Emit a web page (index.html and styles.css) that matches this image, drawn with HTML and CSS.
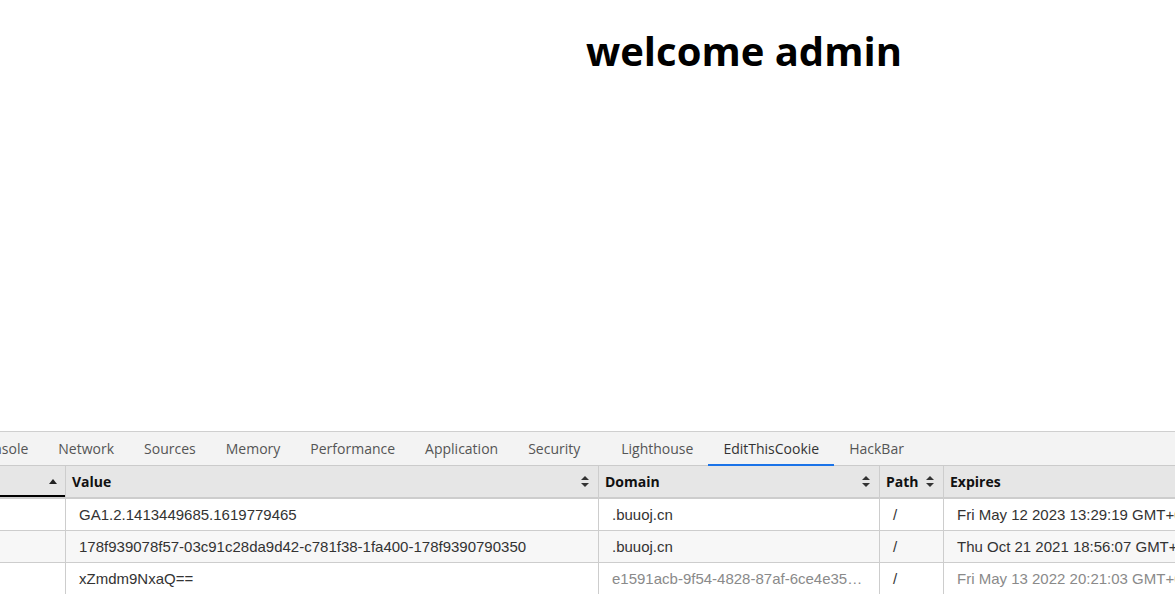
FILE: index.html
```html
<!DOCTYPE html>
<html>
<head>
<meta charset="utf-8">
<link rel="stylesheet" href="styles.css">
</head>
<body>
<main class="page">
  <h1 class="title">welcome admin</h1>
</main>
<section class="devtools">
  <nav class="tabs">
    <span class="tab">Console</span>
    <span class="tab">Network</span>
    <span class="tab">Sources</span>
    <span class="tab">Memory</span>
    <span class="tab">Performance</span>
    <span class="tab">Application</span>
    <span class="tab">Security</span>
    <span class="tab tab-ext">Lighthouse</span>
    <span class="tab active">EditThisCookie</span>
    <span class="tab">HackBar</span>
  </nav>
  <div class="cookies">
    <div class="row head">
      <div class="cell sorted"><span></span><i class="arrow-up"></i></div>
      <div class="cell"><span>Value</span><i class="sort"></i></div>
      <div class="cell"><span>Domain</span><i class="sort"></i></div>
      <div class="cell"><span>Path</span><i class="sort"></i></div>
      <div class="cell"><span>Expires</span></div>
    </div>
    <div class="row">
      <div class="cell"></div>
      <div class="cell">GA1.2.1413449685.1619779465</div>
      <div class="cell">.buuoj.cn</div>
      <div class="cell">/</div>
      <div class="cell">Fri May 12 2023 13:29:19 GMT+0800</div>
    </div>
    <div class="row alt">
      <div class="cell"></div>
      <div class="cell">178f939078f57-03c91c28da9d42-c781f38-1fa400-178f9390790350</div>
      <div class="cell">.buuoj.cn</div>
      <div class="cell">/</div>
      <div class="cell">Thu Oct 21 2021 18:56:07 GMT+0800</div>
    </div>
    <div class="row last">
      <div class="cell"></div>
      <div class="cell">xZmdm9NxaQ==</div>
      <div class="cell dim"><span class="clip">e1591acb-9f54-4828-87af-6ce4e35a1b2c.node4.buuoj.cn</span></div>
      <div class="cell">/</div>
      <div class="cell dim">Fri May 13 2022 20:21:03 GMT+0800</div>
    </div>
  </div>
</section>
</body>
</html>
```

FILE: styles.css
```css
html, body {
  margin: 0;
  padding: 0;
  background: #fff;
  overflow: hidden;
}

.page {
  height: 431px;
  padding-left: 586px;
  box-sizing: border-box;
}

.title {
  margin: 0;
  padding-top: 24px;
  font-family: "Open Sans", "Noto Sans", sans-serif;
  font-weight: 700;
  font-size: 40px;
  line-height: 54px;
  color: #000;
  letter-spacing: 0;
}

.devtools {
  border-top: 1px solid #cfcfcf;
  overflow: hidden;
  width: 1175px;
}

.tabs {
  display: flex;
  height: 33px;
  background: #f3f3f3;
  border-bottom: 1px solid #cbcbcb;
  margin-left: -39px;
  font-family: "Open Sans", "Noto Sans", sans-serif;
  font-size: 14px;
  color: #555;
}

.tab {
  display: flex;
  align-items: center;
  padding: 0 15px;
  white-space: nowrap;
  box-sizing: border-box;
  border-bottom: 2px solid transparent;
  margin-bottom: -1px;
  padding-top: 1px;
}

.tab-ext {
  margin-left: 11px;
}

.tab.active {
  color: #333;
  border-bottom-color: #1a73e8;
}

.cookies {
  width: 1400px;
}

.row {
  display: grid;
  grid-template-columns: 65px 532px 280px 63px 400px;
  column-gap: 1px;
  background: #cdcdcd;
  height: 31px;
  border-bottom: 1px solid #cdcdcd;
  font-family: "Liberation Sans", Arial, sans-serif;
  font-size: 15px;
  color: #333;
}

.row .cell {
  background: #fff;
  display: flex;
  align-items: center;
  padding-left: 13px;
  white-space: nowrap;
  overflow: hidden;
  min-width: 0;
}

.row.alt .cell {
  background: #f7f7f7;
}

.row.last {
  border-bottom: none;
}

.cell.dim {
  color: #8a8a8a;
  padding-right: 10px;
}

.clip {
  display: block;
  min-width: 0;
  overflow: hidden;
  text-overflow: ellipsis;
  white-space: nowrap;
}

.row.head {
  height: 31px;
  border-bottom: 2px solid #cdcdcd;
  font-family: "Open Sans", "Noto Sans", sans-serif;
  font-weight: 700;
  font-size: 14px;
  color: #111;
}

.row.head .cell {
  background: #e6e6e6;
  padding-left: 6px;
  padding-right: 8px;
  justify-content: space-between;
}

.row.head .cell.sorted {
  box-shadow: inset 0 -2px 0 #000;
  padding-right: 8px;
}

.row.head .cell:nth-child(4) {
  justify-content: flex-start;
  gap: 7px;
}

.arrow-up {
  width: 0;
  height: 0;
  border-left: 4.5px solid transparent;
  border-right: 4.5px solid transparent;
  border-bottom: 5px solid #222;
}

.sort {
  position: relative;
  width: 9px;
  height: 11px;
  display: inline-block;
}

.sort::before,
.sort::after {
  content: "";
  position: absolute;
  left: 0;
  width: 0;
  height: 0;
  border-left: 4.5px solid transparent;
  border-right: 4.5px solid transparent;
}

.sort::before {
  top: 0;
  border-bottom: 4.5px solid #333;
}

.sort::after {
  bottom: 0;
  border-top: 4.5px solid #333;
}
```
